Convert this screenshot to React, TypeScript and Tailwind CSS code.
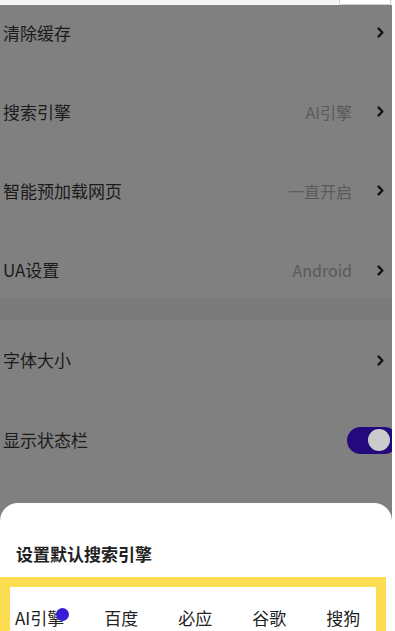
import React from 'react';

const font = { fontFamily: '"Noto Sans CJK SC", "Noto Sans", sans-serif' };

const Chevron = () => (
  <svg width="7" height="11" viewBox="0 0 7 11" className="shrink-0">
    <path d="M1.6 1.6 L5.4 5.5 L1.6 9.4" fill="none" stroke="#141414" strokeWidth="2.4" strokeLinecap="round" strokeLinejoin="round" />
  </svg>
);

interface RowProps {
  label: string;
  value?: string;
  height: string;
}

const SettingRow = ({ label, value, height }: RowProps) => (
  <div className={`flex items-center pl-[3px] pr-[8px] ${height}`}>
    <span className="text-[17px] leading-6 text-[#1b1b1b]">{label}</span>
    <div className="ml-auto flex items-center gap-[25px]">
      {value ? <span className="text-[16px] leading-6 text-[#5a5a5a]">{value}</span> : <></>}
      <Chevron />
    </div>
  </div>
);

const engines = ['AI引擎', '百度', '必应', '谷歌', '搜狗'];

const App = () => {
  return (
    <div className="w-[395px] h-[631px] overflow-hidden bg-white pr-[3px]" style={font}>
      <div className="h-[5px] bg-[#f4f4f4] flex justify-end">
        <div className="w-[52px] h-[5px] mr-[1px] border-x border-b border-[#cfcfcf] bg-white rounded-b-[2px]"></div>
      </div>

      <div className="bg-[#808080] h-[626px] overflow-hidden">
        <div className="-mt-[12px]">
          <SettingRow label="清除缓存" height="h-[79px]" />
          <SettingRow label="搜索引擎" value="AI引擎" height="h-[79px]" />
          <SettingRow label="智能预加载网页" value="一直开启" height="h-[79px]" />
          <div className="h-[68px] flex items-start pt-[28px] pl-[3px] pr-[8px]">
            <span className="text-[17px] leading-6 text-[#1b1b1b]">UA设置</span>
            <div className="ml-auto flex items-center gap-[25px] h-6">
              <span className="text-[16px] leading-6 text-[#5a5a5a]">Android</span>
              <Chevron />
            </div>
          </div>
        </div>

        <div className="h-[22px] bg-[#7b7b7b]"></div>

        <SettingRow label="字体大小" height="h-[80px]" />
        <div className="h-[80px] flex items-center pl-[3px] overflow-hidden">
          <span className="text-[17px] leading-6 text-[#1b1b1b]">显示状态栏</span>
          <div className="ml-auto -mr-[6px] w-[51px] h-[27px] rounded-full bg-[#23097c] flex items-center pl-[21px]">
            <div className="w-[22px] h-[22px] rounded-full bg-[#cbcbcb]"></div>
          </div>
        </div>

        <div className="h-[23px]"></div>

        <div className="bg-white rounded-t-[18px] h-[200px]">
          <div className="pt-[39px] pl-[16px] text-[17px] leading-6 font-bold text-[#222222]">设置默认搜索引擎</div>
          <div className="mt-[11px] mr-[6px] border-[10px] border-[#fcdd52] bg-white h-[80px]">
            <div className="flex gap-[40px] pl-[5px] pt-[19px]">
              {engines.map((name, i) => (
                <div key={name} className="relative text-[17px] leading-6 text-[#222222]">
                  {name}
                  {i == 0 ? (
                    <div className="absolute left-[41px] top-[2px] w-[13px] h-[13px] rounded-full bg-[#3a1bd6]"></div>
                  ) : (
                    <></>
                  )}
                </div>
              ))}
            </div>
          </div>
        </div>
      </div>
    </div>
  );
};

export default App;
